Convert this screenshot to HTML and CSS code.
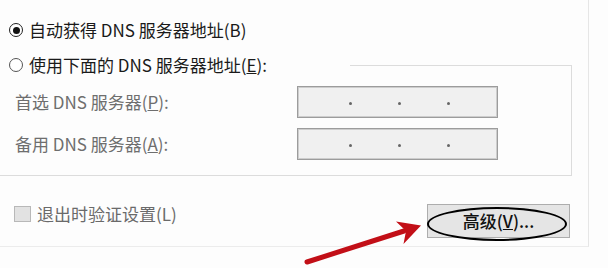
FILE: index.html
```html
<!DOCTYPE html>
<html lang="zh-CN">
<head>
<meta charset="utf-8">
<title>DNS 设置</title>
<link rel="stylesheet" href="styles.css">
</head>
<body>
<div class="page">
  <div class="panel">
    <div class="radio-row auto-row">
      <span class="radio checked"></span>
      <span class="label">自动获得 DNS 服务器地址(B)</span>
    </div>
    <fieldset class="group">
      <legend class="legend">
        <span class="radio-row">
          <span class="radio"></span>
          <span class="label">使用下面的 DNS 服务器地址(<u>E</u>):</span>
        </span>
      </legend>
      <div class="fields">
        <span class="field-label">首选 DNS 服务器(<u>P</u>):</span>
        <div class="ip"><i class="dot"></i><i class="dot"></i><i class="dot"></i></div>
        <span class="field-label">备用 DNS 服务器(<u>A</u>):</span>
        <div class="ip"><i class="dot"></i><i class="dot"></i><i class="dot"></i></div>
      </div>
    </fieldset>
    <div class="footer">
      <div class="check-row">
        <span class="checkbox"></span>
        <span class="check-label">退出时验证设置(L)</span>
      </div>
      <button class="adv-btn" type="button">高级(<u>V</u>)...</button>
    </div>
  </div>
  <svg class="arrow" width="150" height="68" viewBox="0 0 150 68" aria-hidden="true">
    <line x1="17" y1="62" x2="114" y2="31" stroke="#c20f17" stroke-width="5" stroke-linecap="round"/>
    <polygon points="131,25.5 106,21.5 116,31 113.5,44" fill="#c20f17"/>
  </svg>
</div>
</body>
</html>
```

FILE: styles.css
```css
html, body {
  margin: 0;
  padding: 0;
  background: #fdfdfd;
}

body {
  font-family: "Noto Sans CJK SC", "Noto Sans", sans-serif;
  font-size: 17px;
  color: #1a1a1a;
}

.page {
  position: relative;
  width: 608px;
  height: 268px;
  overflow: hidden;
}

.panel {
  width: 589px;
  height: 247px;
  box-sizing: border-box;
  padding-top: 18px;
  border-right: 1px solid #e6e6e6;
  border-bottom: 1px solid #ececec;
}

.radio-row {
  display: flex;
  align-items: center;
  gap: 6px;
  height: 24px;
  line-height: 24px;
  padding-left: 9px;
  white-space: nowrap;
}

.auto-row {
  margin-bottom: 11px;
}

.radio {
  width: 14px;
  height: 14px;
  box-sizing: border-box;
  border: 1.5px solid #555;
  border-radius: 50%;
  background: #fff;
  display: flex;
  align-items: center;
  justify-content: center;
  flex: none;
}

.radio.checked {
  border-color: #222;
}

.radio.checked::before {
  content: "";
  width: 7px;
  height: 7px;
  border-radius: 50%;
  background: #111;
}

.group {
  margin: 0;
  padding: 0 0 15px 0;
  width: 572px;
  box-sizing: border-box;
  min-width: 0;
  border: 1px solid #dcdcdc;
  border-left: none;
}

.legend {
  padding: 0;
  width: 350px;
  box-sizing: border-box;
}

.fields {
  display: grid;
  grid-template-columns: 282px 201px;
  row-gap: 10px;
  align-items: center;
  padding: 9px 0 0 15px;
}

.field-label {
  color: #6e6e6e;
  line-height: 24px;
  white-space: nowrap;
}

.ip {
  height: 32px;
  box-sizing: border-box;
  border: 1px solid #9c9c9c;
  box-shadow: inset 0 0 0 1px #cdcdcd;
  background: #f0f0f0;
  display: flex;
  align-items: center;
  gap: 46px;
  padding-left: 51px;
}

.dot {
  width: 3px;
  height: 3px;
  border-radius: 50%;
  background: #666;
  margin-top: 3px;
}

.footer {
  display: flex;
  align-items: flex-start;
  padding: 26px 18px 0 14px;
}

.check-row {
  display: flex;
  align-items: center;
  gap: 6px;
  height: 24px;
  line-height: 24px;
  color: #6a6a6a;
  white-space: nowrap;
}

.checkbox {
  width: 17px;
  height: 16px;
  box-sizing: border-box;
  border: 1px solid #b8b8b8;
  background: #e2e2e2;
  flex: none;
}

.adv-btn {
  position: relative;
  margin: 2px 0 0 auto;
  width: 143px;
  height: 34px;
  box-sizing: border-box;
  border: 1px solid #adadad;
  background: #e5e5e5;
  font-family: inherit;
  font-size: 17px;
  font-weight: 500;
  color: #111;
  padding: 0;
  line-height: 30px;
  cursor: default;
}

.adv-btn::after {
  content: "";
  position: absolute;
  left: -1px;
  top: 2px;
  width: 140px;
  height: 34px;
  box-sizing: border-box;
  border: 2.5px solid #000;
  border-radius: 50%;
}

.arrow {
  position: absolute;
  left: 290px;
  top: 200px;
}
```
